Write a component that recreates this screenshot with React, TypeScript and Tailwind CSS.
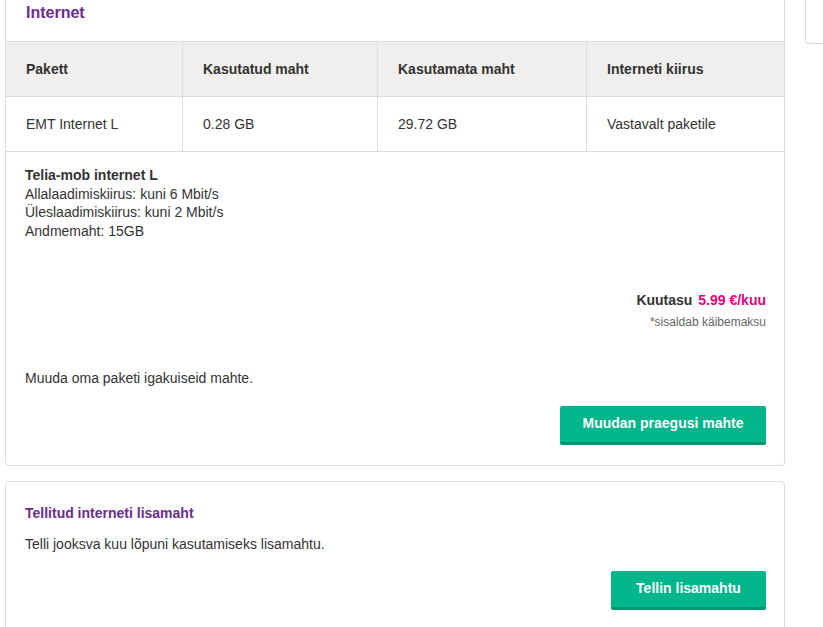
import React from 'react';

const rows = [
  { pakett: 'EMT Internet L', used: '0.28 GB', left: '29.72 GB', speed: 'Vastavalt paketile' },
];

const cols = ['w-[176px]', 'w-[195px]', 'w-[209px]', 'flex-1'];

export default function App() {
  return (
    <div
      className="w-[823px] h-[627px] overflow-hidden bg-white flex text-[14px] text-[#333]"
      style={{ fontFamily: '"Liberation Sans", Arial, sans-serif' }}
    >
      <div className="ml-[5px] w-[780px] shrink-0 flex flex-col">
        {/* Internet card */}
        <div className="border border-t-0 border-[#dcdcdc] rounded-b-[4px] bg-white">
          <div className="h-[41px] px-5 pt-[1px]">
            <h2 className="text-[16px] leading-[24px] font-bold text-[#6b2c8f]">Internet</h2>
          </div>

          <div className="border-t border-[#dcdcdc]">
            <div className="flex h-[55px] bg-[#f0efee] border-b border-[#dcdcdc] font-bold">
              {['Pakett', 'Kasutatud maht', 'Kasutamata maht', 'Interneti kiirus'].map((h, i) => (
                <div
                  key={h}
                  className={`${cols[i]} flex items-center px-5 ${i > 0 ? 'border-l border-[#dcdcdc]' : ''}`}
                >
                  {h}
                </div>
              ))}
            </div>
            {rows.map((r) => (
              <div key={r.pakett} className="flex h-[55px] border-b border-[#dcdcdc]">
                {[r.pakett, r.used, r.left, r.speed].map((v, i) => (
                  <div
                    key={i}
                    className={`${cols[i]} flex items-center px-5 ${i > 0 ? 'border-l border-[#dcdcdc]' : ''}`}
                  >
                    {v}
                  </div>
                ))}
              </div>
            ))}
          </div>

          <div className="px-[18px] pt-[14px] pb-[20px] flex flex-col">
            <div className="leading-[18.7px] pl-[1px]">
              <div className="font-bold">Telia-mob internet L</div>
              <div>Allalaadimiskiirus: kuni 6 Mbit/s</div>
              <div>Üleslaadimiskiirus: kuni 2 Mbit/s</div>
              <div>Andmemaht: 15GB</div>
            </div>

            <div className="mt-[50px] text-right">
              <div className="leading-[19px] font-bold">
                Kuutasu <span className="ml-[2px] text-[#e4057c]">5.99 €/kuu</span>
              </div>
              <div className="mt-[4px] text-[12px] leading-[16px] text-[#666]">*sisaldab käibemaksu</div>
            </div>

            <p className="mt-[39px] pl-[1px] leading-[19px]">Muuda oma paketi igakuiseid mahte.</p>

            <div className="mt-[18px] flex justify-end">
              <button className="w-[206px] h-[39px] rounded-[2px] bg-[#00b68a] border-b-[3px] border-[#009470] text-white font-bold">
                Muudan praegusi mahte
              </button>
            </div>
          </div>
        </div>

        {/* Extra data card */}
        <div className="mt-[15px] border border-[#dcdcdc] rounded-[4px] bg-white pl-[19px] pr-[18px] pt-[22px] pb-[20px]">
          <h3 className="leading-[19px] font-bold text-[#6b2c8f]">Tellitud interneti lisamaht</h3>
          <p className="mt-[12px] leading-[19px]">Telli jooksva kuu lõpuni kasutamiseks lisamahtu.</p>
          <div className="mt-[17px] flex justify-end">
            <button className="w-[155px] h-[39px] rounded-[2px] bg-[#00b68a] border-b-[3px] border-[#009470] text-white font-bold">
              Tellin lisamahtu
            </button>
          </div>
        </div>
      </div>

      {/* side panel fragment */}
      <div className="ml-[20px] shrink-0">
        <div className="w-[40px] h-[44px] border border-t-0 border-r-0 border-[#dcdcdc] rounded-bl-[4px] bg-white" />
      </div>
    </div>
  );
}
